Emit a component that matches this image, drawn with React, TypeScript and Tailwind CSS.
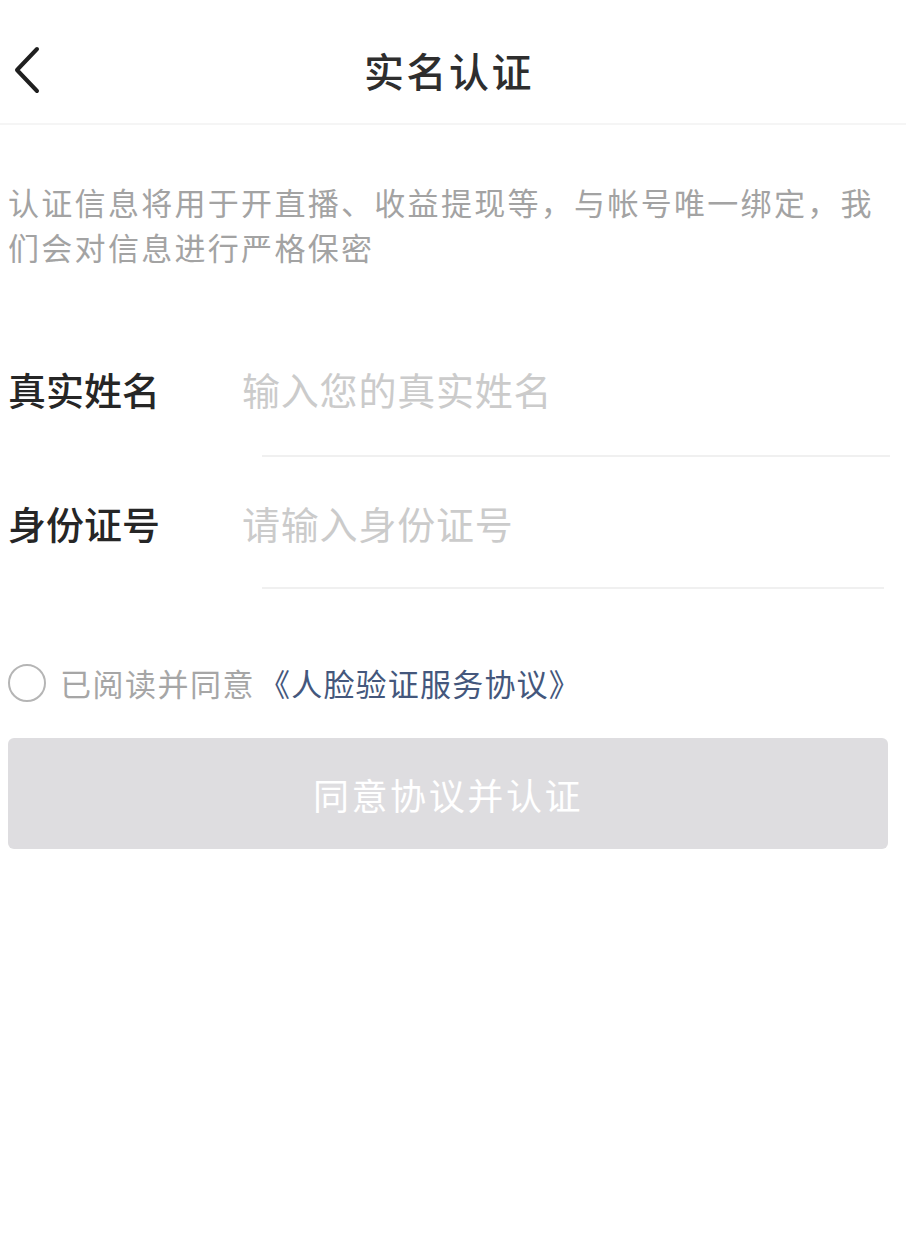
import React from "react";

export default function App() {
  return (
    <div
      className="w-full min-h-[1253px] bg-white"
      style={{ fontFamily: '"Noto Sans CJK SC", "Noto Sans", sans-serif' }}
    >
      {/* Header */}
      <div className="grid grid-cols-[1fr_auto_1fr] items-center h-[125px] pt-[16px] border-b-2 border-[#f5f5f5]">
        <div className="pl-[12px] flex items-center">
          <svg width="30" height="48" viewBox="0 0 30 48" fill="none">
            <path d="M25 3 L5 24 L25 45" stroke="#1f1f1f" strokeWidth="4" strokeLinecap="round" strokeLinejoin="round" />
          </svg>
        </div>
        <div className="text-[40px] leading-[50px] tracking-[2.5px] font-medium text-[#2e2e2e] pr-[8px]">实名认证</div>
        <div />
      </div>

      {/* Description */}
      <p className="px-[8px] pt-[54px] text-[31px] leading-[45px] tracking-[2.3px] text-[#a3a3a3]">
        认证信息将用于开直播、收益提现等，与帐号唯一绑定，我们会对信息进行严格保密
      </p>

      {/* Form rows */}
      <div className="mt-[54px]">
        <div className="h-[134px] flex flex-col">
          <div className="flex-1 flex items-center pl-[8px] pb-[2px]">
            <span className="w-[234px] text-[38px] font-medium text-[#262626]">真实姓名</span>
            <span className="text-[38px] tracking-[0.8px] text-[#cbcbcb]">输入您的真实姓名</span>
          </div>
          <div className="ml-[262px] mr-[16px] h-[2px] bg-[#f0f0f0]" />
        </div>
        <div className="h-[132px] flex flex-col">
          <div className="flex-1 flex items-center pl-[8px]">
            <span className="w-[234px] text-[38px] font-medium text-[#262626]">身份证号</span>
            <span className="text-[38px] tracking-[0.8px] text-[#cbcbcb]">请输入身份证号</span>
          </div>
          <div className="ml-[262px] mr-[22px] h-[2px] bg-[#f0f0f0]" />
        </div>
      </div>

      {/* Agreement */}
      <div className="mt-[75px] flex items-center h-[38px] pl-[8px]">
        <div className="w-[38px] h-[38px] rounded-full border-[2.5px] border-[#b5b5b5] shrink-0" />
        <span className="ml-[14px] text-[31px] tracking-[1.5px] text-[#a6a6a6]">已阅读并同意</span>
        <span className="ml-[4px] text-[31px] tracking-[1.2px] text-[#44577c]">《人脸验证服务协议》</span>
      </div>

      {/* Button */}
      <div className="mt-[36px] ml-[8px] mr-[18px] h-[111px] rounded-[6px] bg-[#dedde0] flex items-center justify-center">
        <span className="text-[36px] tracking-[2.6px] text-white">同意协议并认证</span>
      </div>
    </div>
  );
}
